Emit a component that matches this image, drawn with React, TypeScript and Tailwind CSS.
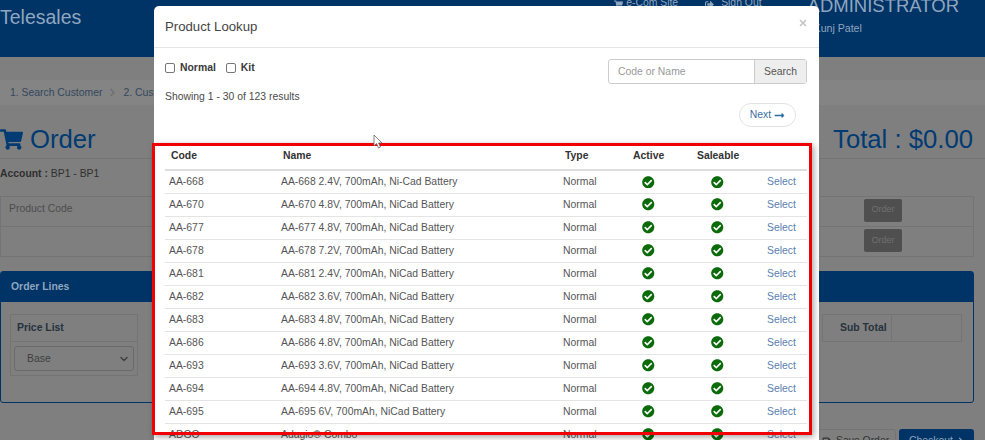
import { FaShoppingCart, FaCheckCircle, FaLongArrowAltRight, FaSignOutAlt, FaSave, FaChevronRight } from "react-icons/fa";
import { ChevronDown, X } from "lucide-react";

const products = [
  { code: "AA-668", name: "AA-668 2.4V, 700mAh, Ni-Cad Battery" },
  { code: "AA-670", name: "AA-670 4.8V, 700mAh, NiCad Battery" },
  { code: "AA-677", name: "AA-677 4.8V, 700mAh, NiCad Battery" },
  { code: "AA-678", name: "AA-678 7.2V, 700mAh, NiCad Battery" },
  { code: "AA-681", name: "AA-681 2.4V, 700mAh, NiCad Battery" },
  { code: "AA-682", name: "AA-682 3.6V, 700mAh, NiCad Battery" },
  { code: "AA-683", name: "AA-683 4.8V, 700mAh, NiCad Battery" },
  { code: "AA-686", name: "AA-686 4.8V, 700mAh, NiCad Battery" },
  { code: "AA-693", name: "AA-693 3.6V, 700mAh, NiCad Battery" },
  { code: "AA-694", name: "AA-694 4.8V, 700mAh, NiCad Battery" },
  { code: "AA-695", name: "AA-695 6V, 700mAh, NiCad Battery" },
  { code: "ADGO", name: "Adagio® Combo" },
];

const Page = () => (
  <div className="h-[440px] w-[985px] overflow-hidden bg-[#7f7f7f] text-[#3a3a3a]">
    <header className="flex h-[57px] justify-between bg-[#003366]">
      <div className="mt-[1px] text-[19.5px] leading-[32px] text-[#8fa6bf]">Telesales</div>
      <div className="mr-[26px] flex">
        <div className="mr-[46px] flex h-[8px] gap-[27px] text-[10.4px] leading-[5px] text-[#8fa6bf]">
          <span className="flex gap-[3px]">
            <FaShoppingCart className="text-[9px]" />
            e-Com Site
          </span>
          <span className="flex gap-[7px]">
            <FaSignOutAlt className="text-[9px]" />
            Sign Out
          </span>
        </div>
        <div className="text-[#8fa6bf]">
          <div className="-mt-[6px] text-[18.5px] leading-[24px]">ADMINISTRATOR</div>
          <div className="mt-[2px] pl-[6px] text-[10.6px] leading-[16px]">Kunj Patel</div>
        </div>
      </div>
    </header>

    <div className="mb-[19px] mt-[23px] flex h-[25px] items-center gap-[6px] bg-[#848484] pl-[10px] text-[10.4px] text-[#33475c]">
      <span>1. Search Customer</span>
      <FaChevronRight className="text-[9px] text-[#6f6f6f]" />
      <span>2. Customer</span>
    </div>

    <div className="flex justify-between border-b border-[#747474] pb-[4px] pr-[12px]">
      <div className="flex items-center gap-[7px] text-[25.7px] leading-[30px] text-[#003b73]">
        <FaShoppingCart className="text-[23px]" />
        Order
      </div>
      <div className="text-[25.7px] leading-[30px] text-[#003b73]">Total : $0.00</div>
    </div>

    <div className="pt-[7px] text-[10.4px] leading-[16px] text-[#2f2f2f]">
      <b>Account :</b> BP1 - BP1
    </div>

    <div className="mr-[11px] mt-[14px] border border-[#747474] text-[10.4px] text-[#4d4d4d]">
      <div className="flex h-[30px] items-center justify-between border-b border-[#747474] pl-[8px] pr-[71px]">
        <span className="-mt-[6px]">Product Code</span>
        <span className="-mt-[3px] flex h-[23px] w-[38px] items-center justify-center rounded-[2px] bg-[#4f4f4f] text-[9px] text-[#6f6f6f]">Order</span>
      </div>
      <div className="flex h-[29px] items-center justify-end pr-[71px]">
        <span className="-mt-[2px] flex h-[23px] w-[38px] items-center justify-center rounded-[2px] bg-[#4f4f4f] text-[9px] text-[#6f6f6f]">Order</span>
      </div>
    </div>

    <section className="mr-[11px] mt-[14px] h-[132px] rounded-[3px] border border-[#003366]">
      <div className="flex h-[30px] items-center bg-[#003366] pl-[10px] text-[10.4px] font-bold text-[#8fa6bf]">
        Order Lines
      </div>
      <div className="ml-[9px] mr-[11px] mt-[12px] flex text-[10.4px] font-bold text-[#26323d]">
        <div className="h-[62px] w-[128px] border border-[#747474]">
          <div className="flex h-[27px] items-center border-b border-[#747474] pl-[6px]">Price List</div>
          <div className="mx-[3px] mt-[4px] flex h-[25px] items-center justify-between rounded-[3px] border border-[#6a6a6a] pl-[12px] pr-[3px] font-normal text-[#404040]">
            Base
            <ChevronDown size={12} strokeWidth={3} />
          </div>
        </div>
        <div className="ml-auto flex h-[28px] border border-[#747474]">
          <div className="flex w-[69px] items-center border-r border-[#747474] pl-[17px]">Sub Total</div>
          <div className="w-[69px]" />
        </div>
      </div>
    </section>

    <div className="mr-[11px] mt-[26px] flex justify-end gap-[3px] text-[10.4px]">
      <span className="flex h-[24px] w-[83px] items-center gap-[5px] whitespace-nowrap rounded-[3px] border border-[#747474] pl-[8px] text-[#333]">
        <FaSave className="text-[9px]" />
        Save Order
      </span>
      <span className="flex h-[24px] w-[75px] items-center gap-[4px] whitespace-nowrap rounded-[3px] bg-[#003366] pl-[10px] text-[#8fa6bf]">
        Checkout
        <FaChevronRight className="text-[8px]" />
      </span>
    </div>
  </div>
);

const ProductModal = () => (
  <div className="absolute left-[154px] top-[6px] h-[440px] w-[665px] overflow-hidden rounded-t-[5px] bg-white text-[#333]">
    <div className="flex h-[42px] items-center justify-between border-b border-[#e5e5e5] px-[11px]">
      <span className="text-[13.2px] text-[#444]">Product Lookup</span>
      <X size={10} strokeWidth={4} className="-mt-[7px] text-[#c4c4c4]" />
    </div>

    <div className="flex justify-between pl-[11px] pr-[12px] pt-[11px]">
      <div className="mt-[1px] flex h-[16px] items-center gap-[5px] text-[10.4px] font-bold text-[#3a3a3a]">
        <span className="h-[10px] w-[10px] rounded-[2px] border border-[#777]" />
        <span className="mr-[5px]">Normal</span>
        <span className="h-[10px] w-[10px] rounded-[2px] border border-[#777]" />
        <span>Kit</span>
      </div>
      <div className="flex h-[25px] w-[199px] rounded-[3px] border border-[#ccc] text-[10.4px]">
        <span className="flex flex-1 items-center pl-[9px] text-[#999]">Code or Name</span>
        <span className="flex w-[52px] items-center justify-center border-l border-[#ccc] bg-[#eeeeee] text-[#555]">Search</span>
      </div>
    </div>

    <div className="pl-[11px] pt-[5px] text-[10.4px] leading-[16px] text-[#4a4a4a]">Showing 1 - 30 of 123 results</div>

    <div className="-mt-[2px] flex justify-end pr-[23px]">
      <span className="flex h-[24px] w-[57px] items-center justify-center gap-[3px] rounded-[12px] border border-[#e2e2e2] text-[10.4px] text-[#3a6ea5]">
        Next
        <FaLongArrowAltRight className="text-[11px] text-[#2e6da4]" />
      </span>
    </div>

    <table className="ml-[11px] mt-[15px] w-[642px] table-fixed border-collapse text-[10.4px] text-[#555]">
      <thead>
        <tr className="h-[28px] border-b-2 border-[#dddddd] text-left font-bold text-[#333]">
          <th className="w-[116px] pl-[6px]">Code</th>
          <th className="w-[282px] pl-[2px]">Name</th>
          <th className="w-[68px] pl-[2px]">Type</th>
          <th className="w-[66px] pl-[2px]">Active</th>
          <th className="w-[70px]">Saleable</th>
          <th />
        </tr>
      </thead>
      <tbody>
        {products.map((product) => (
          <tr key={product.code} className="h-[23px] border-b border-[#e4e4e4]">
            <td className="pl-[4px]">{product.code}</td>
            <td>{product.name}</td>
            <td>Normal</td>
            <td className="pl-[11px]">
              <FaCheckCircle className="text-[12.5px] text-[#0b6b0b]" />
            </td>
            <td className="pl-[14px]">
              <FaCheckCircle className="text-[12.5px] text-[#0b6b0b]" />
            </td>
            <td className="text-[#5a80b0]">Select</td>
          </tr>
        ))}
      </tbody>
    </table>
  </div>
);

export default function App() {
  return (
    <div className="relative h-[440px] w-[985px] overflow-hidden font-['Liberation_Sans',Arial,sans-serif]">
      <Page />
      <ProductModal />
      <div className="absolute left-[152px] top-[143px] h-[292px] w-[660px] border-[3px] border-[#f00000] shadow-[2px_2px_6px_rgba(0,0,0,0.35)]" />
      <svg className="absolute left-[373px] top-[134px]" width="11" height="15" viewBox="0 0 11 15">
        <path d="M1 1v11l2.5-2.5L5.5 14l2-1-2-4H9z" fill="#fff" stroke="#666" strokeWidth="0.8" />
      </svg>
    </div>
  );
}
